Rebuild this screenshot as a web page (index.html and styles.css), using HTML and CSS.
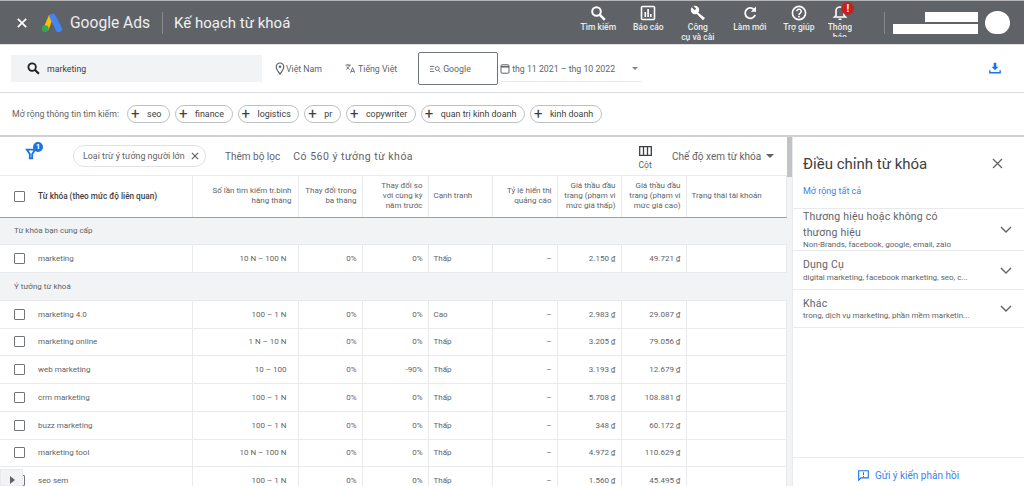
FILE: index.html
```html
<!DOCTYPE html>
<html lang="vi">
<head>
    <meta charset="UTF-8">
    <title>Kế hoạch từ khoá</title>
    <link rel="stylesheet" href="styles.css">
</head>
<body>
    <header class="topbar">
        <svg class="close-icon" width="10" height="10" viewBox="0 0 12 12"><path d="M1 1l10 10M11 1L1 11" stroke="#fff" stroke-width="2"/></svg>
        <svg class="logo" width="22" height="20" viewBox="0 0 22 20">
            <path d="M8 2L2.500 15l5 2L12 5z" fill="#fbbc04"/>
            <path d="M8.200 3.600a3.400 3.400 0 0 1 5.900-1.700l6.600 12.600a3.300 3.300 0 0 1-5.800 3.100z" fill="#4285f4"/>
            <circle cx="4.200" cy="15.600" r="3.400" fill="#34a853"/>
        </svg>
        <span class="brand">Google Ads</span>
        <span class="divider"></span>
        <span class="page-title">Kế hoạch từ khoá</span>
        <nav class="actions">
            <div class="action action-search">
                <svg width="16" height="16" viewBox="0 0 16 16"><circle cx="6.500" cy="6.500" r="4.300" fill="none" stroke="#fff" stroke-width="2"/><path d="M9.800 9.800l5 5" stroke="#fff" stroke-width="2.600"/></svg>
                <span>Tìm kiếm</span>
            </div>
            <div class="action action-report">
                <svg width="16" height="16" viewBox="0 0 16 16"><rect x="1.500" y="1.500" width="13" height="13" rx="1" fill="none" stroke="#fff" stroke-width="1.600"/><path d="M4.500 7h1.600v5H4.500zM7.300 4h1.600v8H7.300zM10 9h1.600v3H10z" fill="#fff"/></svg>
                <span>Báo cáo</span>
            </div>
            <div class="action action-tools">
                <svg width="16" height="16" viewBox="0 0 16 16"><circle cx="5" cy="5" r="4.200" fill="#fff"/><path d="M5.500 5.500l9.500 7.500-2 2.300-8-8z" fill="#fff"/><path d="M2.500 1.500l3 3" stroke="#5f6368" stroke-width="2.200"/></svg>
                <span>Công<br>cụ và cài</span>
            </div>
            <div class="action action-refresh">
                <svg width="16" height="16" viewBox="0 0 16 16"><path d="M12.500 5A5.200 5.200 0 1 0 13.200 10" fill="none" stroke="#fff" stroke-width="1.800"/><path d="M14 1.500v5.200H8.800z" fill="#fff"/></svg>
                <span>Làm mới</span>
            </div>
            <div class="action action-help">
                <svg width="16" height="16" viewBox="0 0 16 16"><circle cx="8" cy="8" r="6.600" fill="none" stroke="#fff" stroke-width="1.600"/><path d="M5.800 6.300a2.200 2.200 0 1 1 3.400 1.900c-.8.500-1.200.9-1.200 1.800" fill="none" stroke="#fff" stroke-width="1.500"/><rect x="7.200" y="10.800" width="1.600" height="1.600" fill="#fff"/></svg>
                <span>Trợ giúp</span>
            </div>
            <div class="action action-bell">
                <svg width="16" height="16" viewBox="0 0 16 16"><path d="M8 2a4 4 0 0 0-4 4v4.500L2.500 12h11L12 10.500V6a4 4 0 0 0-4-4z" fill="none" stroke="#fff" stroke-width="1.600"/><path d="M6.500 13.500h3V15h-3z" fill="#fff"/></svg>
                <span class="bell-text">Thông<br>báo</span>
                <b class="alert">!</b>
            </div>
        </nav>
        <span class="divider divider-account"></span>
        <div class="account">
            <span class="mask mask-short"></span>
            <span class="mask mask-long"></span>
        </div>
        <span class="avatar"></span>
    </header>

    <section class="toolbar">
        <div class="search-box">
            <svg width="13" height="13" viewBox="0 0 16 16"><circle cx="6.300" cy="6.300" r="4.600" fill="none" stroke="#202124" stroke-width="2.200"/><path d="M9.600 9.600l5 5" stroke="#202124" stroke-width="2.600"/></svg>
            <span>marketing</span>
        </div>
        <div class="tool tool-location">
            <svg width="10" height="13" viewBox="0 0 10 13"><path d="M5 1a3.800 3.800 0 0 0-3.800 3.800C1.200 7.500 5 12 5 12s3.800-4.500 3.800-7.200A3.800 3.800 0 0 0 5 1z" fill="none" stroke="#5f6368" stroke-width="1.200"/><circle cx="5" cy="4.800" r="1.300" fill="#5f6368"/></svg>
            <span>Việt Nam</span>
        </div>
        <div class="tool tool-language">
            <svg width="11" height="11" viewBox="0 0 13 12"><path d="M.5 2h6.500M3.500.5V2M1.500 7c2-1 3.500-3 4-5M2 3.500c.7 1.500 2 3 3.500 3.800M6.500 11l2.500-6 2.500 6M7.300 9.400h3.500" fill="none" stroke="#5f6368" stroke-width="1"/></svg>
            <span>Tiếng Việt</span>
        </div>
        <div class="network">
            <svg width="11" height="8" viewBox="0 0 13 9"><path d="M0 1.500h5M0 4.500h4M0 7.500h5" stroke="#5f6368"/><circle cx="8.500" cy="4" r="2.300" fill="none" stroke="#5f6368"/><path d="M10 6l2 2.300" stroke="#5f6368"/></svg>
            <span>Google</span>
        </div>
        <div class="date-range">
            <svg width="10" height="11" viewBox="0 0 10 11"><rect x="1" y="1.800" width="8" height="8.400" rx="1" fill="none" stroke="#5f6368"/><path d="M1 3.800h8" stroke="#5f6368" stroke-width="1.500"/></svg>
            <span class="date-text">thg 11 2021 – thg 10 2022</span>
            <span class="caret caret-small"></span>
        </div>
        <svg class="download" width="12" height="12" viewBox="0 0 14 14"><path d="M5.500 1h3v4.500h2.500L7 9.500 3 5.500h2.500z" fill="#1a73e8"/><path d="M1 9.500v3h12v-3" fill="none" stroke="#1a73e8" stroke-width="1.600"/></svg>
    </section>

    <section class="chips">
        <span class="chips-label">Mở rộng thông tin tìm kiếm:</span>
        <span class="chip">seo</span>
        <span class="chip">finance</span>
        <span class="chip">logistics</span>
        <span class="chip">pr</span>
        <span class="chip">copywriter</span>
        <span class="chip">quan trị kinh doanh</span>
        <span class="chip">kinh doanh</span>
    </section>

    <main class="workspace">
        <section class="results">
            <div class="filters">
                <div class="filter-icon">
                    <svg width="12" height="12" viewBox="0 0 13 12"><path d="M2 1.200h9L7.800 6v4.800H5.200V6z" fill="none" stroke="#1a73e8" stroke-width="2"/></svg>
                    <b class="filter-count">1</b>
                </div>
                <div class="filter-pill">
                    <span>Loại trừ ý tưởng người lớn</span>
                    <svg width="8" height="8" viewBox="0 0 9 9"><path d="M1 1l7 7M8 1L1 8" stroke="#5f6368" stroke-width="1.300"/></svg>
                </div>
                <span class="filter-add">Thêm bộ lọc</span>
                <span class="filter-total">Có 560 ý tưởng từ khóa</span>
                <div class="columns-btn">
                    <svg width="13" height="10" viewBox="0 0 13 10"><path d="M.7.7h11.600v8.600H.7zM4.500.7v8.600M8.500.7v8.600" fill="none" stroke="#3c4043" stroke-width="1.300"/></svg>
                    <span>Cột</span>
                </div>
                <div class="view-select">
                    <span>Chế độ xem từ khóa</span>
                    <span class="caret"></span>
                </div>
            </div>
            <table class="keywords">
                <colgroup>
                    <col class="c-key"><col class="c-search"><col class="c-three"><col class="c-year"><col class="c-comp"><col class="c-share"><col class="c-low"><col class="c-high"><col>
                </colgroup>
                <thead>
                    <tr>
                        <th class="left key-head"><span class="check"></span>Từ khóa (theo mức độ liên quan)</th>
                        <th class="search-head">Số lần tìm kiếm tr.bình hàng tháng</th>
                        <th>Thay đổi trong ba tháng</th>
                        <th class="year-head">Thay đổi so với cùng kỳ năm trước</th>
                        <th class="left">Cạnh tranh</th>
                        <th>Tỷ lệ hiển thị quảng cáo</th>
                        <th>Giá thầu đầu trang (phạm vi mức giá thấp)</th>
                        <th>Giá thầu đầu trang (phạm vi mức giá cao)</th>
                        <th class="left">Trạng thái tài khoản</th>
                    </tr>
                </thead>
                <tbody>
                    <tr class="group"><td colspan="9">Từ khóa bạn cung cấp</td></tr>
                    <tr><td class="left key"><span class="check"></span>marketing</td><td class="vol">10 N – 100 N</td><td>0%</td><td>0%</td><td class="left">Thấp</td><td>–</td><td>2.150 ₫</td><td>49.721 ₫</td><td></td></tr>
                    <tr class="group"><td colspan="9">Ý tưởng từ khoá</td></tr>
                    <tr><td class="left key"><span class="check"></span>marketing 4.0</td><td class="vol">100 – 1 N</td><td>0%</td><td>0%</td><td class="left">Cao</td><td>–</td><td>2.983 ₫</td><td>29.087 ₫</td><td></td></tr>
                    <tr><td class="left key"><span class="check"></span>marketing online</td><td class="vol">1 N – 10 N</td><td>0%</td><td>0%</td><td class="left">Thấp</td><td>–</td><td>3.205 ₫</td><td>79.056 ₫</td><td></td></tr>
                    <tr><td class="left key"><span class="check"></span>web marketing</td><td class="vol">10 – 100</td><td>0%</td><td>-90%</td><td class="left">Thấp</td><td>–</td><td>3.193 ₫</td><td>12.679 ₫</td><td></td></tr>
                    <tr><td class="left key"><span class="check"></span>crm marketing</td><td class="vol">100 – 1 N</td><td>0%</td><td>0%</td><td class="left">Thấp</td><td>–</td><td>5.708 ₫</td><td>108.881 ₫</td><td></td></tr>
                    <tr><td class="left key"><span class="check"></span>buzz marketing</td><td class="vol">100 – 1 N</td><td>0%</td><td>0%</td><td class="left">Thấp</td><td>–</td><td>348 ₫</td><td>60.172 ₫</td><td></td></tr>
                    <tr><td class="left key"><span class="check"></span>marketing tool</td><td class="vol">10 N – 100 N</td><td>0%</td><td>0%</td><td class="left">Thấp</td><td>–</td><td>4.972 ₫</td><td>110.629 ₫</td><td></td></tr>
                    <tr><td class="left key"><span class="check"></span>seo sem</td><td class="vol">100 – 1 N</td><td>0%</td><td>0%</td><td class="left">Thấp</td><td>–</td><td>1.560 ₫</td><td>45.495 ₫</td><td></td></tr>
                </tbody>
            </table>
            <div class="expand-tab"><span></span></div>
        </section>
        <div class="scrollbar"><span class="thumb"></span></div>
        <aside class="refine">
            <div class="refine-head">
                <h2>Điều chỉnh từ khóa</h2>
                <svg width="11" height="11" viewBox="0 0 11 11"><path d="M1 1l9 9M10 1l-9 9" stroke="#5f6368" stroke-width="1.300"/></svg>
            </div>
            <a class="expand-all">Mở rộng tất cả</a>
            <div class="refine-item item-tall">
                <div>
                    <div class="item-title">Thương hiệu hoặc không có thương hiệu</div>
                    <div class="item-sub">Non-Brands, facebook, google, email, zalo</div>
                </div>
                <svg width="12" height="7" viewBox="0 0 12 7"><path d="M1 1l5 5 5-5" fill="none" stroke="#5f6368" stroke-width="1.400"/></svg>
            </div>
            <div class="refine-item">
                <div>
                    <div class="item-title">Dụng Cụ</div>
                    <div class="item-sub">digital marketing, facebook marketing, seo, c...</div>
                </div>
                <svg width="12" height="7" viewBox="0 0 12 7"><path d="M1 1l5 5 5-5" fill="none" stroke="#5f6368" stroke-width="1.400"/></svg>
            </div>
            <div class="refine-item item-last">
                <div>
                    <div class="item-title">Khác</div>
                    <div class="item-sub">trong, dịch vụ marketing, phần mềm marketin...</div>
                </div>
                <svg width="12" height="7" viewBox="0 0 12 7"><path d="M1 1l5 5 5-5" fill="none" stroke="#5f6368" stroke-width="1.400"/></svg>
            </div>
            <div class="feedback">
                <svg width="11" height="11" viewBox="0 0 11 11"><path d="M.7.7h9.600v7.200H3L.7 10.200z" fill="none" stroke="#1a73e8" stroke-width="1.100"/><path d="M5 2.300h1v3H5zM5 6h1v1H5z" fill="#1a73e8"/></svg>
                <span>Gửi ý kiến phản hồi</span>
            </div>
        </aside>
    </main>
</body>
</html>
```

FILE: styles.css
```css
* {
    box-sizing: border-box;
}

html, body {
    height: 100%;
}

body {
    margin: 0;
    width: 1024px;
    height: 486px;
    overflow: hidden;
    display: flex;
    flex-direction: column;
    font-family: Roboto, "Liberation Sans", sans-serif;
    color: #3c4043;
    background: #fff;
}

/* top bar */
.topbar {
    flex: none;
    height: 45px;
    display: flex;
    align-items: center;
    background: #5f6368;
    border-top: 1px solid #b5b7ba;
    border-bottom: 1px solid #e0e0e0;
    color: #fff;
}

.close-icon {
    margin-left: 17px;
}

.logo {
    margin-left: 14px;
}

.brand {
    margin-left: 7px;
    font-size: 15.600px;
    color: #eceded;
    white-space: nowrap;
}

.divider {
    width: 1px;
    height: 22px;
    margin-left: 12px;
    background: #85888c;
}

.page-title {
    margin-left: 11px;
    font-size: 15px;
    color: #f1f1f1;
    white-space: nowrap;
}

.actions {
    display: flex;
    height: 100%;
    margin-left: 283px;
}

.action {
    position: relative;
    display: flex;
    flex-direction: column;
    align-items: center;
    padding-top: 4px;
    font-size: 8.500px;
    font-weight: 500;
    line-height: 9.500px;
    text-align: center;
    color: #eceded;
    white-space: nowrap;
}

.action svg {
    height: 16px;
    margin-bottom: 2px;
}

.action-search { width: 50px; }
.action-report { width: 50px; }
.action-tools { width: 49px; }
.action-refresh { width: 55px; }
.action-help { width: 43px; }
.action-bell { width: 39px; }

.bell-text {
    display: block;
    height: 14px;
    overflow: hidden;
}

.alert {
    position: absolute;
    top: 1px;
    left: 21px;
    width: 13px;
    height: 13px;
    border-radius: 50%;
    background: #c5221f;
    color: #fff;
    font-size: 10px;
    line-height: 13px;
}

.divider-account {
    margin-left: 25px;
}

.account {
    margin-left: 8px;
    width: 85px;
    display: flex;
    flex-direction: column;
    align-items: flex-end;
    gap: 2px;
}

.mask {
    display: block;
    background: #fff;
}

.mask-short {
    width: 53px;
    height: 10px;
}

.mask-long {
    width: 85px;
    height: 10px;
}

.avatar {
    width: 25px;
    height: 23px;
    margin-left: 7px;
    border-radius: 12px 12px 11px 11px;
    background: #fff;
}

/* search settings */
.toolbar {
    flex: none;
    height: 48px;
    display: flex;
    align-items: center;
    border-bottom: 1px solid #dadce0;
    font-size: 8.750px;
    color: #5f6368;
}

.search-box {
    width: 251px;
    height: 27px;
    margin-left: 11px;
    display: flex;
    align-items: center;
    gap: 7px;
    padding-left: 16px;
    background: #f1f3f4;
    color: #3c4043;
}

.tool {
    display: flex;
    align-items: center;
    gap: 2px;
}

.tool-location {
    margin-left: 13px;
    gap: 1px;
}

.tool-language {
    margin-left: 23px;
}

.network {
    width: 80px;
    height: 33px;
    margin-left: 21px;
    display: flex;
    align-items: center;
    gap: 2px;
    padding-left: 11px;
    border: 1px solid #70757a;
    border-radius: 2px;
}

.date-range {
    width: 142px;
    height: 26px;
    margin-left: 2px;
    display: flex;
    align-items: center;
    gap: 2px;
    border-bottom: 1px solid #e8eaed;
    margin-top: 1px;
}

.date-text {
    white-space: nowrap;
}

.caret {
    width: 0;
    height: 0;
    border-left: 4px solid transparent;
    border-right: 4px solid transparent;
    border-top: 4px solid #5f6368;
}

.caret-small {
    margin-left: 15px;
    border-left-width: 3px;
    border-right-width: 3px;
    border-top-width: 3px;
    border-top-color: #80868b;
}

.download {
    margin-left: 347px;
    margin-bottom: 2px;
}

/* refine chips */
.chips {
    flex: none;
    height: 44px;
    display: flex;
    align-items: center;
    padding-left: 12px;
    gap: 5px;
    border-bottom: 2px solid #d0d1d3;
    font-size: 8.750px;
    color: #5f6368;
}

.chips-label {
    margin-right: 3px;
    white-space: nowrap;
}

.chip {
    height: 18px;
    display: flex;
    align-items: center;
    padding: 0 7.600px 0 19px;
    position: relative;
    border: 1px solid #bdc1c6;
    border-radius: 9px;
    font-size: 8.900px;
    color: #3c4043;
    white-space: nowrap;
}

.chip::before {
    content: "+";
    position: absolute;
    left: 3px;
    top: 50%;
    transform: translateY(-50%);
    font-size: 15px;
    font-weight: 400;
    color: #3c4043;
}

/* main area */
.workspace {
    flex: 1;
    min-height: 0;
    display: flex;
}

.results {
    position: relative;
    width: 787px;
    flex: none;
    overflow: hidden;
}

.filters {
    height: 39px;
    display: flex;
    align-items: center;
    font-size: 10px;
    color: #5f6368;
    border-bottom: 1px solid #e8eaed;
}

.filter-icon {
    position: relative;
    margin-left: 25px;
    width: 20px;
    height: 20px;
    padding-top: 2px;
}

.filter-count {
    position: absolute;
    top: -4px;
    left: 8px;
    width: 10px;
    height: 10px;
    border-radius: 50%;
    background: #1a73e8;
    color: #fff;
    font-size: 8px;
    line-height: 10px;
    text-align: center;
}

.filter-pill {
    margin-left: 28px;
    width: 133px;
    height: 22px;
    display: flex;
    align-items: center;
    justify-content: space-between;
    padding: 0 6px 0 9px;
    border: 1px solid #e0e2e5;
    border-radius: 11px;
    font-size: 8.900px;
    white-space: nowrap;
}

.filter-add {
    margin-left: 19px;
    white-space: nowrap;
}

.filter-total {
    margin-left: 13px;
    font-size: 10.500px;
    letter-spacing: .5px;
    white-space: nowrap;
}

.columns-btn {
    margin-left: 224px;
    width: 16px;
    display: flex;
    flex-direction: column;
    align-items: center;
    gap: 4px;
    font-size: 8.500px;
    padding-top: 4px;
}

.view-select {
    margin-left: 19px;
    display: flex;
    align-items: center;
    gap: 5px;
    white-space: nowrap;
}

/* table */
.keywords {
    width: 787px;
    table-layout: fixed;
    border-collapse: collapse;
    font-size: 8px;
    color: #5f6368;
}

.c-key { width: 192px; }
.c-search { width: 106px; }
.c-three { width: 64px; }
.c-year { width: 66px; }
.c-comp { width: 64px; }
.c-share { width: 65px; }
.c-low { width: 64px; }
.c-high { width: 65px; }

.keywords th {
    height: 41px;
    padding: 0 5px;
    font-weight: 400;
    line-height: 10px;
    text-align: right;
    border-right: 1px solid #e8eaed;
    border-bottom: 1px solid #9aa0a6;
}

.keywords .search-head {
    padding-right: 6px;
}

.keywords .year-head {
    padding-left: 14px;
}

.keywords td {
    height: 27.750px;
    padding: 0 5px;
    text-align: right;
    border-right: 1px solid #e8eaed;
    border-bottom: 1px solid #e8eaed;
    white-space: nowrap;
}

.keywords .left {
    text-align: left;
}

.keywords .key-head {
    font-size: 8.200px;
    font-weight: 500;
    color: #3c4043;
    white-space: nowrap;
}

.keywords .key-head,
.keywords .key {
    padding-left: 14px;
}

.keywords .vol {
    padding-right: 11px;
}

.keywords .group td {
    text-align: left;
    background: #f1f3f4;
    padding-left: 14px;
    border-right: none;
}

.check {
    display: inline-block;
    width: 11px;
    height: 11px;
    margin-right: 13px;
    vertical-align: middle;
    border: 1px solid #70757a;
    border-radius: 1px;
}

.expand-tab {
    position: absolute;
    left: 0;
    bottom: 0;
    width: 23px;
    height: 17px;
    padding: 6px 0 0 9px;
    background: #f1f3f4;
    border: 1px solid #e8eaed;
}

.expand-tab span {
    display: block;
    width: 0;
    height: 0;
    border-top: 4px solid transparent;
    border-bottom: 4px solid transparent;
    border-left: 5px solid #5f6368;
}

.scrollbar {
    width: 5px;
    flex: none;
    background: #f1f3f4;
}

.thumb {
    display: block;
    height: 40px;
    background: #c1c3c6;
}

/* refine panel */
.refine {
    flex: 1;
    display: flex;
    flex-direction: column;
    border-left: 1px solid #e8eaed;
    color: #5f6368;
}

.refine-head {
    height: 36px;
    display: flex;
    align-items: flex-end;
    justify-content: space-between;
    padding: 0 21px 0 10px;
}

.refine-head h2 {
    margin: 0;
    font-size: 15px;
    font-weight: 400;
    color: #3c4043;
}

.refine-head svg {
    margin-bottom: 4px;
}

.expand-all {
    margin: 13px 0 11px 10px;
    font-size: 9px;
    line-height: 11px;
    color: #3b82ec;
}

.refine-item {
    display: flex;
    align-items: center;
    justify-content: space-between;
    height: 39px;
    padding: 0 12px 0 10px;
    border-top: 1px solid #e8eaed;
}

.item-tall {
    height: 42px;
}

.item-last {
    border-bottom: 1px solid #e8eaed;
}

.item-title {
    width: 150px;
    font-size: 10.500px;
    line-height: 15.500px;
    letter-spacing: .2px;
    color: #5f6368;
}

.item-sub {
    font-size: 8px;
    line-height: 10px;
    white-space: nowrap;
}

.feedback {
    margin-top: auto;
    height: 29px;
    display: flex;
    align-items: center;
    justify-content: center;
    gap: 6px;
    padding-top: 6px;
    border-top: 1px solid #e8eaed;
    font-size: 10px;
    color: #3b82ec;
}
```
